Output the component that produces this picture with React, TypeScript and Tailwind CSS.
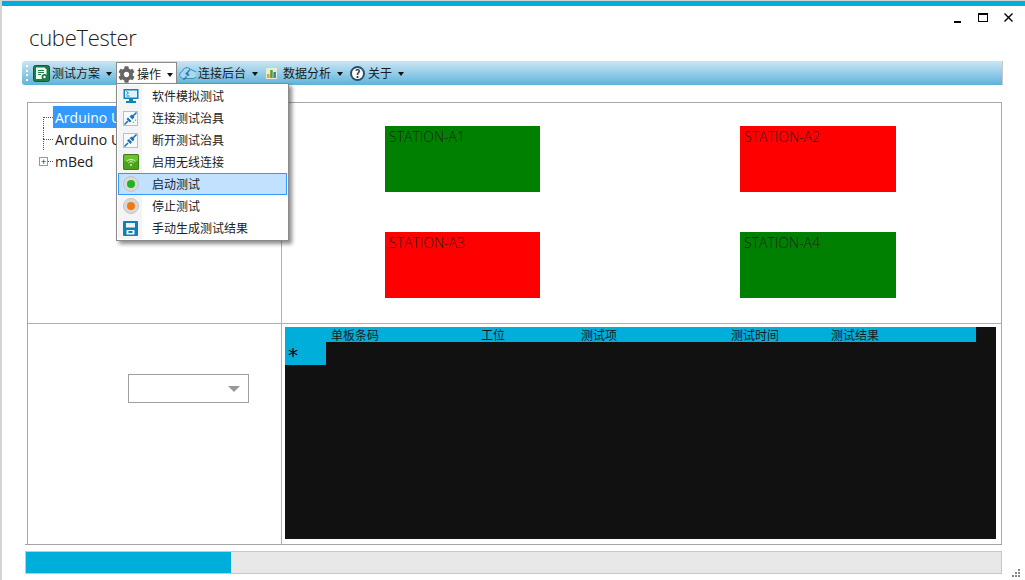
import React from 'react'
import { FaCog } from 'react-icons/fa'

const cjk = "font-['Noto_Sans_CJK_SC','Noto_Sans',sans-serif]"

function Caret({ className = 'ml-[6px]' }: { className?: string }) {
  return <span className={`mt-px h-0 w-0 border-x-[3px] border-t-[4px] border-x-transparent border-t-[#111] ${className}`} />
}

function PlanIcon() {
  return (
    <svg width="17" height="17" viewBox="0 0 17 17">
      <rect x="0.5" y="0.5" width="16" height="16" rx="2" fill="#1b7f47" stroke="#0f5c31" />
      <path d="M3 2.5h8.5l2 2V14H3z" fill="#f2f8f2" />
      <path d="M5 5.5h6M5 7.5h6M5 9.5h3" stroke="#1b7f47" strokeWidth="1" />
      <circle cx="11.5" cy="12" r="3" fill="#1b7f47" />
      <circle cx="11.5" cy="12" r="1.2" fill="#fff" />
    </svg>
  )
}

function CloudIcon() {
  return (
    <svg width="17" height="16" viewBox="0 0 17 16">
      <path d="M4 13.5a3.6 3.6 0 0 1-.6-7.1 4.6 4.6 0 0 1 8.2-2 3.6 3.6 0 0 1 2.4 1.3 3.8 3.8 0 0 1 .2 7.8z" fill="#a9d8ee" stroke="#3f8fbd" />
      <path d="M4.5 15l3-3.5M8 8l3-3.5" stroke="#2f7fb0" strokeWidth="1.4" />
      <path d="M6 8.5l3 3 1.5-2-2.5-2.5z" fill="#2f7fb0" />
    </svg>
  )
}

function ChartIcon() {
  return (
    <svg width="11" height="11" viewBox="0 0 11 11">
      <rect width="11" height="11" fill="#ecebd8" />
      <rect x="1" y="6" width="2.5" height="4" fill="#e8a020" />
      <rect x="4.2" y="2" width="2.5" height="8" fill="#4aa52e" />
      <rect x="7.4" y="4" width="2.5" height="6" fill="#3a78c2" />
    </svg>
  )
}

function ScreenIcon() {
  return (
    <svg width="16" height="16" viewBox="0 0 16 16">
      <rect x="0.5" y="1" width="15" height="10" fill="#0d84b8" />
      <rect x="2" y="2.5" width="12" height="7" fill="#dff1f9" />
      <path d="M3.5 3.5l2 1.5-2 1.5M3.5 8h3" stroke="#0d84b8" fill="none" />
      <rect x="6" y="11" width="4" height="2" fill="#0d84b8" />
      <rect x="3" y="13" width="10" height="2" fill="#0d84b8" />
    </svg>
  )
}

function PlugIcon({ apart }: { apart?: boolean }) {
  return (
    <svg width="15" height="15" viewBox="0 0 15 15">
      <rect x="0.5" y="0.5" width="14" height="14" fill="#f4f9fc" stroke="#a9c4d6" />
      <path d="M1.5 13.5l3.5-3.5" stroke="#1f6fb5" strokeWidth="1.6" />
      <path d="M10 5l3.5-3.5" stroke="#1f6fb5" strokeWidth="1.6" />
      <path d={apart ? 'M4 7.5l3.5 3.5 1.5-2-3-3zM6.5 5l3.5 3.5 1.5-2.5-2.5-2.5z' : 'M3.5 8l3.5 3.5 1.5-1.5-3.5-3.5zM6.5 5.5l3 3 2-2.5-2.5-2.5z'} fill="#1f6fb5" />
      {!apart && <path d="M10 11l1.5 1M12 9l1.5.5" stroke="#1f6fb5" strokeDasharray="1 1" />}
    </svg>
  )
}

function WifiIcon() {
  return (
    <svg width="16" height="16" viewBox="0 0 16 16">
      <rect width="16" height="16" rx="1.5" fill="#4ba31a" />
      <rect x="1" y="1" width="14" height="6" fill="#6cc22c" />
      <rect x="0.5" y="0.5" width="15" height="15" rx="1.5" fill="none" stroke="#3f7d1d" />
      <path d="M3.5 7.5a6 6 0 0 1 9 0M5.3 9a3.5 3.5 0 0 1 5.4 0" stroke="#d8f5b8" fill="none" />
      <circle cx="8" cy="11" r="1" fill="#d8f5b8" />
    </svg>
  )
}

function LedIcon({ color }: { color: string }) {
  return (
    <svg width="16" height="16" viewBox="0 0 16 16">
      <circle cx="8" cy="8" r="7.5" fill="#d9d9d9" stroke="#c4c4c4" />
      <circle cx="8" cy="8" r="4" fill={color} />
    </svg>
  )
}

function SaveIcon() {
  return (
    <svg width="15" height="15" viewBox="0 0 15 15">
      <rect width="15" height="15" rx="1" fill="#0f7fb5" />
      <rect x="3" y="2" width="9" height="4.5" fill="#eef7fb" />
      <rect x="3.5" y="9" width="8" height="4.5" fill="#eef7fb" />
      <rect x="5.5" y="10" width="4" height="2" fill="#0f7fb5" />
    </svg>
  )
}

const menuItems = [
  { label: '软件模拟测试', icon: <ScreenIcon /> },
  { label: '连接测试治具', icon: <PlugIcon /> },
  { label: '断开测试治具', icon: <PlugIcon apart /> },
  { label: '启用无线连接', icon: <WifiIcon /> },
  { label: '启动测试', icon: <LedIcon color="#22b322" />, active: true },
  { label: '停止测试', icon: <LedIcon color="#f07a10" /> },
  { label: '手动生成测试结果', icon: <SaveIcon /> },
]

function Station({ name, ok }: { name: string; ok?: boolean }) {
  return (
    <div className={`h-[66px] pl-1 pt-[3px] text-[14px] leading-4 text-[#222] font-['Open_Sans',sans-serif] font-light ${ok ? 'bg-[#008000]' : 'bg-[#ff0000]'}`}>
      {name}
    </div>
  )
}

export default function App() {
  return (
    <div className="relative flex h-[580px] w-[1025px] flex-col overflow-hidden border-l-2 border-t border-[#d4d4d4] bg-white font-['Open_Sans',sans-serif]">
      <div className="h-[5px] shrink-0 bg-[#00aedb]" />

      {/* title + window buttons */}
      <div className="flex h-[55px] shrink-0 items-start justify-between pl-[27px]">
        <h1 className="mt-[15px] text-[22px] font-light leading-8 tracking-[-0.3px] text-[#222]">cubeTester</h1>
        <div className="mr-[12px] mt-[6px] flex items-center text-black">
          <span className="mt-[9px] h-0.5 w-[7px] bg-black" />
          <span className="ml-[17px] h-[9px] w-[10px] border border-t-2 border-black" />
          <svg className="ml-[16px]" width="9" height="9" viewBox="0 0 9 9">
            <path d="M0.5 0.5l8 8M8.5 0.5l-8 8" stroke="#000" strokeWidth="1.4" />
          </svg>
        </div>
      </div>

      {/* toolbar */}
      <div className={`ml-[20px] flex h-[24px] w-[981px] shrink-0 items-center rounded-l-[3px] border-r border-[#c8c8c8] bg-gradient-to-b from-[#cae6f3] to-[#5cb3db] pl-[4px] text-[12px] text-[#1a1a1a] ${cjk}`}>
        <span className="mr-[5px] flex h-4 flex-col justify-between">
          <i className="size-0.5 bg-white" />
          <i className="size-0.5 bg-white" />
          <i className="size-0.5 bg-white" />
          <i className="size-0.5 bg-white" />
        </span>
        <PlanIcon />
        <span className="ml-[2px]">测试方案</span>
        <Caret />
        <div className="relative z-10 ml-[4px] mt-px flex h-[23px] w-[61px] items-center self-start border border-b-0 border-[#8a8a8a] bg-white pl-[1px]">
          <FaCog className="size-[17px] text-[#666]" />
          <span className="ml-[2px]">操作</span>
          <Caret />
        </div>
        <span className="ml-[2px] flex items-center"><CloudIcon /></span>
        <span className="ml-[2px]">连接后台</span>
        <Caret />
        <span className="ml-[8px]"><ChartIcon /></span>
        <span className="ml-[6px]">数据分析</span>
        <Caret />
        <span className="ml-[7px] flex size-[15px] items-center justify-center rounded-full border-2 border-[#2d4f66] bg-white text-[11px] font-bold leading-none text-[#17405c]">?</span>
        <span className="ml-[3px]">关于</span>
        <Caret />
      </div>

      {/* dropdown */}
      <div className={`absolute left-[114px] top-[82px] z-20 flex w-[173px] flex-col border border-[#8a8a8a] bg-white p-px text-[12px] text-[#222] shadow-[3px_3px_4px_rgba(0,0,0,0.45)] ${cjk}`}>
        <div className="absolute bottom-px left-px top-px w-[24px] bg-[#f4f4f4]" />
        {menuItems.map((item) => (
          <div
            key={item.label}
            className={`relative flex h-[22px] items-center border ${item.active ? 'border-[#3399ff] bg-[#c2e0ff]' : 'border-transparent'}`}
          >
            <span className="flex w-[23px] justify-center">{item.icon}</span>
            <span className="ml-[10px]">{item.label}</span>
          </div>
        ))}
      </div>

      {/* main panel */}
      <div className="ml-[25px] mt-[17px] flex shrink-0 flex-col">
        <div className="grid h-[442px] w-[975px] grid-cols-[254px_1fr] grid-rows-[221px_1fr] border-x border-t border-[#a8a8a8]">
          {/* tree */}
          <div className="border-r border-b border-[#b0b0b0] pl-[15px] pt-[3px] text-[14px] text-[#222]">
            <div className="flex h-[22px] items-start">
              <span className="mt-[11px] h-[11px] w-[10px] border-l border-t border-dotted border-[#555]" />
              <span className="h-[22px] w-[110px] overflow-hidden whitespace-nowrap bg-[#3399ff] pl-0.5 leading-[24px] text-white">Arduino Uno</span>
            </div>
            <div className="flex h-[22px] items-start">
              <span className="flex flex-col">
                <span className="h-[11px] w-[10px] border-l border-dotted border-[#555]" />
                <span className="h-[11px] w-[10px] border-l border-t border-dotted border-[#555]" />
              </span>
              <span className="pl-0.5 leading-[24px] whitespace-nowrap">Arduino Uno</span>
            </div>
            <div className="-ml-[4px] flex h-[22px] items-center">
              <span className="flex size-[9px] items-center justify-center border border-[#999] text-[9px] leading-none text-[#223]">+</span>
              <span className="w-[5px] border-t border-dotted border-[#555]" />
              <span className="pl-0.5 pt-0.5 leading-[24px]">mBed</span>
            </div>
          </div>

          {/* stations */}
          <div className="grid grid-cols-[155px_156px] content-start justify-between gap-y-[40px] border-b border-[#b0b0b0] pl-[103px] pr-[105px] pt-[23px]">
            <Station name="STATION-A1" ok />
            <Station name="STATION-A2" />
            <Station name="STATION-A3" />
            <Station name="STATION-A4" ok />
          </div>

          {/* combo */}
          <div className="border-r border-[#b0b0b0] pl-[100px] pt-[50px]">
            <div className="flex h-[29px] w-[121px] items-center justify-end border border-[#a0a0a0] pr-[8px]">
              <span className="h-0 w-0 border-x-[6px] border-t-[6px] border-x-transparent border-t-[#999]" />
            </div>
          </div>

          {/* data grid */}
          <div className="pl-[3px] pt-[3px]">
            <div className={`h-[212px] w-[711px] bg-[#111] text-[12px] text-[#1a1a1a] ${cjk}`}>
              <div className="flex h-[15px] w-[691px] items-center bg-[#00aedb] pl-[46px] leading-none">
                <span className="w-[150px]">单板条码</span>
                <span className="w-[100px]">工位</span>
                <span className="w-[150px]">测试项</span>
                <span className="w-[100px]">测试时间</span>
                <span>测试结果</span>
              </div>
              <div className="flex h-[23px] w-[41px] items-start bg-[#00aedb] pl-[3px] pt-[3px] font-['DejaVu_Sans',sans-serif] text-[20px] leading-none text-black">*</div>
            </div>
          </div>
        </div>
        <div className="-ml-[2px] h-px w-[977px] bg-[#a4a4a4]" />
      </div>

      {/* progress */}
      <div className="ml-[23px] mt-[6px] flex h-[23px] w-[977px] shrink-0 border border-[#c8c8c8] bg-[#e8e8e8]">
        <div className="h-full w-[205px] bg-[#00aedb]" />
      </div>

      {/* resize grip */}
      <div className="absolute bottom-[3px] right-[5px] grid grid-cols-3 gap-px">
        <i className="size-0.5" /><i className="size-0.5" /><i className="size-0.5 bg-[#888]" />
        <i className="size-0.5" /><i className="size-0.5 bg-[#888]" /><i className="size-0.5 bg-[#888]" />
        <i className="size-0.5 bg-[#888]" /><i className="size-0.5 bg-[#888]" /><i className="size-0.5 bg-[#888]" />
      </div>
    </div>
  )
}
